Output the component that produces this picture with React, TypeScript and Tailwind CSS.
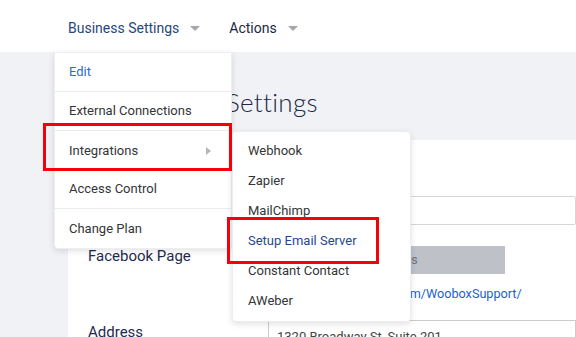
import React from 'react'

const Caret = () => (
  <svg width="10" height="6" viewBox="0 0 10 6" className="ml-[11px] mt-[1px]">
    <path d="M0 0 L10 0 L5 5 Z" fill="#a3a7ad" />
  </svg>
)

const mainItems = [
  { label: 'Edit', active: true, divider: true },
  { label: 'External Connections', divider: true },
  { label: 'Integrations', sub: true },
  { label: 'Access Control', divider: true },
  { label: 'Change Plan' },
]

const subItems = ['Webhook', 'Zapier', 'MailChimp', 'Setup Email Server', 'Constant Contact', 'AWeber']

export default function App() {
  return (
    <div className="relative w-[576px] h-[337px] overflow-hidden bg-[#f1f2f6] font-['Roboto',sans-serif]">
      {/* top nav */}
      <header className="h-[52px] bg-white flex items-center pl-[68px] pt-[5px]">
        <div className="flex items-center text-[14px] text-[#28467f]">
          Business Settings
          <Caret />
        </div>
        <div className="flex items-center ml-[29px] text-[14px] text-[#1d2742]">
          Actions
          <Caret />
        </div>
      </header>

      {/* page heading */}
      <div className="h-[88px] flex items-center pl-[119px] pt-[12px]">
        <h1 className="text-[26px] font-light text-[#1e2846] font-['Lato',sans-serif] tracking-[0.3px]">Business Settings</h1>
      </div>

      {/* settings card */}
      <div className="ml-[68px] bg-white h-[200px] pl-[20px] pt-[56px]">
        <div className="flex">
          <div className="w-[180px] text-[15px] text-[#1f2a50] pt-[4px]">Website</div>
          <div className="flex-1 h-[29px] border border-[#d4d6da] rounded-[2px]"></div>
        </div>
        <div className="flex mt-[21px]">
          <div className="w-[180px] text-[15px] text-[#1f2a50] -mt-[1px]">Facebook Page</div>
          <div className="flex-1">
            <div className="w-[237px] h-[28px] bg-[#bfc1c8] flex items-center px-[15px] text-[13px] text-[#70737a]">
              Select Facebook Pages
            </div>
            <div className="mt-[11px] text-[12.65px] text-[#1d5fd3]">https://www.facebook.com/WooboxSupport/</div>
          </div>
        </div>
        <div className="flex mt-[16px]">
          <div className="w-[180px] text-[15px] text-[#1f2a50] mt-[1px]">Address</div>
          <div className="flex-1 h-[29px] border border-[#c9ccd1] px-[8px] pt-[6px] text-[13px] text-[#444]">
            1320 Broadway St, Suite 201
          </div>
        </div>
      </div>

      {/* Business Settings dropdown */}
      <div className="absolute left-[54px] top-[52px] w-[178px] bg-white rounded-b-[4px] shadow-[0_2px_6px_rgba(0,0,0,0.12)] border border-[#eceef1]">
        {mainItems.map((item) => (
          <div
            key={item.label}
            className={`h-[39px] flex items-center justify-between pl-[14px] pr-[20px] text-[13px] ${
              item.divider ? 'border-b border-[#e9ebee]' : ''
            } ${item.active ? 'text-[#2e69cf]' : 'text-[#333538]'}`}
          >
            {item.label}
            {item.sub && (
              <svg width="5" height="8" viewBox="0 0 5 8">
                <path d="M0 0 L5 4 L0 8 Z" fill="#b3b7bd" />
              </svg>
            )}
          </div>
        ))}
      </div>

      {/* Integrations submenu */}
      <div className="absolute left-[232px] top-[131px] w-[179px] h-[191px] bg-white rounded-[4px] shadow-[0_2px_6px_rgba(0,0,0,0.12)] border border-[#eceef1] pt-[4px]">
        {subItems.map((s) => (
          <div
            key={s}
            className={`h-[30px] flex items-center pl-[15px] text-[13px] ${
              s === 'Setup Email Server' ? 'text-[#1f4893]' : 'text-[#333538]'
            }`}
          >
            {s}
          </div>
        ))}
      </div>

      {/* highlight boxes */}
      <div className="absolute left-[43px] top-[123px] w-[189px] h-[48px] border-[3px] border-[#f5000a]"></div>
      <div className="absolute left-[227px] top-[217px] w-[152px] h-[47px] border-[3px] border-[#f5000a]"></div>
    </div>
  )
}
